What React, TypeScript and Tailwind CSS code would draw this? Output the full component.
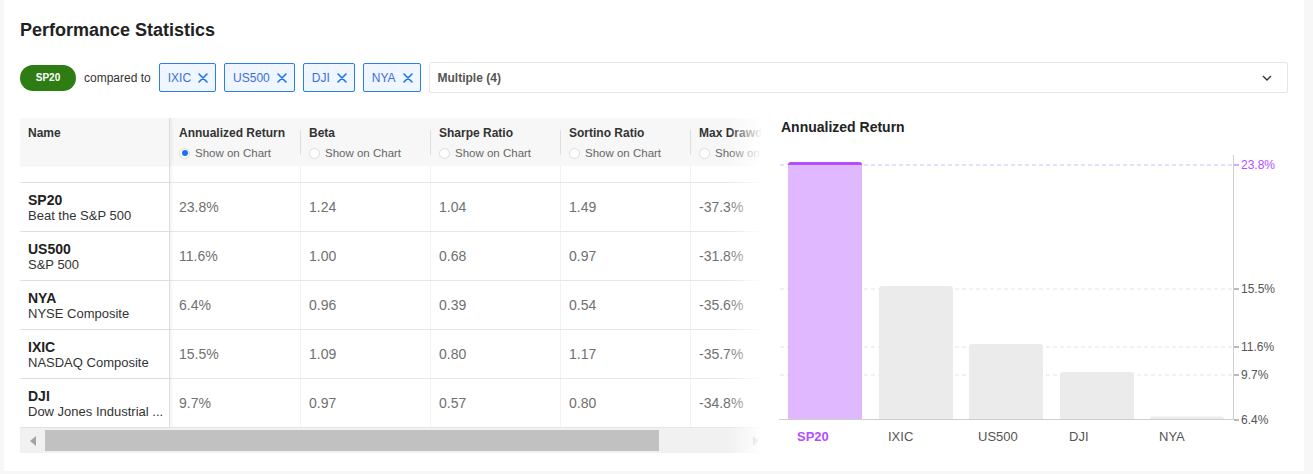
const rows = [
  { code: "SP20", name: "Beat the S&P 500", vals: ["23.8%", "1.24", "1.04", "1.49", "-37.3%"] },
  { code: "US500", name: "S&P 500", vals: ["11.6%", "1.00", "0.68", "0.97", "-31.8%"] },
  { code: "NYA", name: "NYSE Composite", vals: ["6.4%", "0.96", "0.39", "0.54", "-35.6%"] },
  { code: "IXIC", name: "NASDAQ Composite", vals: ["15.5%", "1.09", "0.80", "1.17", "-35.7%"] },
  { code: "DJI", name: "Dow Jones Industrial ...", vals: ["9.7%", "0.97", "0.57", "0.80", "-34.8%"] },
];

const cols = ["Annualized Return", "Beta", "Sharpe Ratio", "Sortino Ratio", "Max Drawdown"];

const bars = [
  { label: "SP20", x: 9, top: 17, hl: true },
  { label: "IXIC", x: 100, top: 141 },
  { label: "US500", x: 190, top: 199 },
  { label: "DJI", x: 281, top: 227 },
  { label: "NYA", x: 371, top: 271.5 },
];

const ticks = [
  { v: "23.8%", y: 20, hl: true },
  { v: "15.5%", y: 144 },
  { v: "11.6%", y: 202 },
  { v: "9.7%", y: 230 },
  { v: "6.4%", y: 275 },
];

function XIcon() {
  return (
    <svg width="10" height="10" viewBox="0 0 10 10" className="shrink-0">
      <path d="M1 1 L9 9 M9 1 L1 9" stroke="#1a73e8" strokeWidth="1.6" strokeLinecap="round" />
    </svg>
  );
}

function Chip({ label }: { label: string }) {
  return (
    <div className="flex h-[29px] items-center gap-[7px] rounded-[2px] border border-[#2b7de9] bg-[#f0f6ff] pl-[8px] pr-[7px] text-[12px] text-[#3b6fd8]">
      <span>{label}</span>
      <XIcon />
    </div>
  );
}

function Radio({ on }: { on?: boolean }) {
  return (
    <span className="flex h-[11px] w-[11px] shrink-0 items-center justify-center rounded-full border border-[#dcdcdc] bg-white">
      {on && <span className="h-[6px] w-[6px] rounded-full bg-[#1a73e8]" />}
    </span>
  );
}

function BarPath({ x, top, w, bottom }: { x: number; top: number; w: number; bottom: number }) {
  const r = 3;
  return `M${x} ${bottom} L${x} ${top + r} Q${x} ${top} ${x + r} ${top} L${x + w - r} ${top} Q${x + w} ${top} ${x + w} ${top + r} L${x + w} ${bottom} Z`;
}

function Chart() {
  return (
    <svg width="509" height="310" viewBox="0 0 509 310" className="block">
      {ticks.slice(0, 4).map((t) => (
        <line
          key={t.v}
          x1="1"
          x2="454"
          y1={t.y}
          y2={t.y}
          stroke={t.hl ? "#dcb8fb" : "#e3e3e3"}
          strokeDasharray="4 3"
        />
      ))}
      {bars.map((b) => (
        <g key={b.label}>
          <path d={BarPath({ x: b.x, top: b.top, w: 74, bottom: 275 })} fill={b.hl ? "#dfb8ff" : "#ebebeb"} />
          {b.hl && <path d={BarPath({ x: b.x, top: b.top, w: 74, bottom: b.top + 3 })} fill="#b44dff" />}
          <text
            x={b.x + 9}
            y="293"
            dominantBaseline="middle"
            fontSize="13"
            fontWeight={b.hl ? 700 : 400}
            fill={b.hl ? "#b44dff" : "#555"}
          >
            {b.label}
          </text>
        </g>
      ))}
      <line x1="0" x2="454" y1="274.5" y2="274.5" stroke="#cfcfcf" />
      <line x1="454.5" x2="454.5" y1="10" y2="275" stroke="#cfcfcf" />
      {ticks.map((t) => (
        <g key={t.v}>
          <line x1="455" x2="460" y1={t.y} y2={t.y} stroke={t.hl ? "#b44dff" : "#777"} />
          <text x="462" y={t.y + 0.5} dominantBaseline="middle" fontSize="12" fill={t.hl ? "#b44dff" : "#555"}>
            {t.v}
          </text>
        </g>
      ))}
    </svg>
  );
}

export default function App() {
  return (
    <div className="min-h-screen bg-[#f7f7f7] font-['Liberation_Sans',Arial,sans-serif]">
      <div className="ml-[4px] w-[1300px] bg-white px-4 pb-4 pt-[18px]">
        <h1 className="text-[18px] font-bold leading-[24px] text-[#222]">Performance Statistics</h1>

        {/* compare row */}
        <div className="mt-[20px] flex h-[31px] items-center gap-2">
          <div className="flex h-[26px] w-[56px] items-center justify-center rounded-full bg-[#2e7d14] text-[10px] font-bold text-white">
            SP20
          </div>
          <span className="text-[12px] text-[#333]">compared to</span>
          <div className="flex gap-2">
            <Chip label="IXIC" />
            <Chip label="US500" />
            <Chip label="DJI" />
            <Chip label="NYA" />
          </div>
          <div className="flex h-[31px] flex-1 items-center justify-between rounded-[2px] border border-[#e6e6e6] pl-[8px] pr-[15px]">
            <span className="text-[12px] font-bold text-[#555]">Multiple (4)</span>
            <svg width="10" height="6" viewBox="0 0 10 6">
              <path d="M1 1 L5 5 L9 1" stroke="#333" strokeWidth="1.4" fill="none" />
            </svg>
          </div>
        </div>

        <div className="mt-[25px] flex">
          {/* Table */}
          <div className="relative w-[742px] shrink-0 overflow-hidden">
            <div className="flex h-[48px] w-[800px] bg-[#f7f7f7]">
              <div className="w-[150px] shrink-0 border-r border-[#dcdcdc] pl-2 pt-[7px] text-[12px] font-bold leading-[16px] text-[#333] shadow-[2px_0_3px_rgba(0,0,0,0.05)]">
                Name
              </div>
              {cols.map((c, i) => (
                <div key={c} className="relative w-[130px] shrink-0 pl-[9px] pt-[7px]">
                  {i > 0 && <span className="absolute left-0 top-[12px] h-[25px] w-px bg-[#dedede]" />}
                  <div className="text-[12px] font-bold leading-[16px] text-[#333]">{c}</div>
                  <div className="mt-[5px] flex items-center gap-[5px] text-[11.5px] leading-[14px] text-[#666]">
                    <Radio on={i === 0} />
                    <span>Show on Chart</span>
                  </div>
                </div>
              ))}
            </div>
            <div className="flex h-[17px] w-[800px] border-b border-[#e8e8e8]">
              <div className="w-[150px] shrink-0 border-r border-[#dcdcdc] shadow-[2px_0_3px_rgba(0,0,0,0.05)]" />
              {cols.map((c, i) => (
                <div key={c} className={`w-[130px] shrink-0 ${i > 0 ? "border-l border-[#f2f2f2]" : ""}`} />
              ))}
            </div>
            {rows.map((r) => (
              <div key={r.code} className="flex h-[49px] w-[800px] border-b border-[#e6e6e6]">
                <div className="flex w-[150px] shrink-0 flex-col justify-center border-r border-[#dcdcdc] pl-2 pt-[1px] shadow-[2px_0_3px_rgba(0,0,0,0.05)]">
                  <div className="text-[14px] font-bold leading-[16px] text-[#222]">{r.code}</div>
                  <div className="whitespace-nowrap text-[13px] leading-[16px] text-[#333]">{r.name}</div>
                </div>
                {r.vals.map((v, i) => (
                  <div
                    key={i}
                    className={`flex w-[130px] shrink-0 items-center pl-[8px] text-[14px] text-[#707070] ${
                      i > 0 ? "border-l border-[#f2f2f2]" : "pl-[9px]"
                    }`}
                  >
                    {v}
                  </div>
                ))}
              </div>
            ))}
            {/* scrollbar */}
            <div className="flex h-[25px] items-center bg-[#f1f1f1]">
              <div className="flex w-[25px] shrink-0 items-center justify-center">
                <svg width="6" height="10" viewBox="0 0 6 10">
                  <path d="M6 0 L0 5 L6 10 Z" fill="#a3a3a3" />
                </svg>
              </div>
              <div className="h-[21px] w-[614px] bg-[#c1c1c1]" />
              <div className="flex flex-1 items-center justify-end pr-[3px]">
                <svg width="6" height="10" viewBox="0 0 6 10">
                  <path d="M0 0 L6 5 L0 10 Z" fill="#a3a3a3" />
                </svg>
              </div>
            </div>
            <div className="pointer-events-none absolute inset-y-0 right-0 w-[34px] bg-linear-to-r from-white/0 to-white" />
          </div>

          {/* Chart */}
          <div className="ml-[17px] flex-1">
            <div className="pl-[2px] pt-[1px] text-[14px] font-bold leading-[16px] text-[#222]">Annualized Return</div>
            <div className="mt-[10px]">
              <Chart />
            </div>
          </div>
        </div>
      </div>
    </div>
  );
}
